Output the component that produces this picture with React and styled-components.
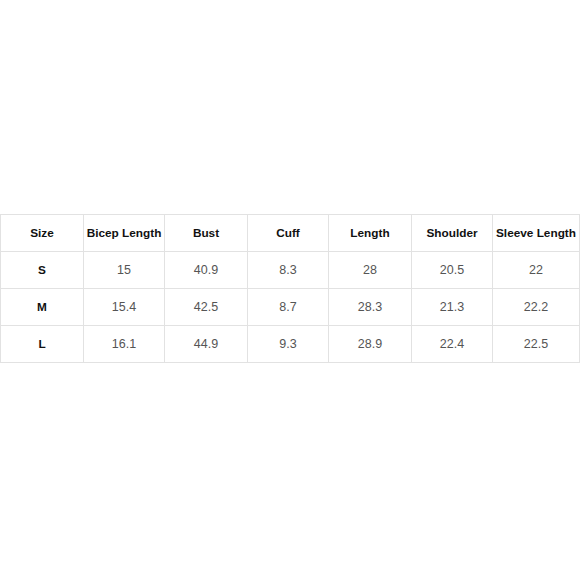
import React from 'react';
import styled, { createGlobalStyle } from 'styled-components';

const GlobalStyle = createGlobalStyle`
    body {
        margin: 0;
        background: #ffffff;
        font-family: 'Liberation Sans', Arial, sans-serif;
    }
`;

const Page = styled.div`
    width: 580px;
    height: 580px;
    padding-top: 214px;
    box-sizing: border-box;
`;

const Table = styled.table`
    width: 579px;
    border-collapse: collapse;
    table-layout: fixed;
`;

const Col = styled.col`
    width: ${props => props.w}px;
`;

const Cell = styled.td`
    height: 36px;
    padding: 0;
    border: 1px solid #e2e2e2;
    text-align: center;
    vertical-align: middle;
    font-size: ${props => (props.head ? '11.8px' : '12.5px')};
    color: ${props => (props.head ? '#111' : '#555')};
    font-weight: ${props => (props.head ? 'bold' : 'normal')};
    white-space: nowrap;
`;

const widths = [83, 81, 83, 81, 83, 81, 87];

const headers = ['Size', 'Bicep Length', 'Bust', 'Cuff', 'Length', 'Shoulder', 'Sleeve Length'];

const rows = [
    ['S', '15', '40.9', '8.3', '28', '20.5', '22'],
    ['M', '15.4', '42.5', '8.7', '28.3', '21.3', '22.2'],
    ['L', '16.1', '44.9', '9.3', '28.9', '22.4', '22.5'],
];

export default function App() {
    return (
        <Page>
            <GlobalStyle />
            <Table>
                <colgroup>
                    {widths.map((w, i) => <Col w={w} key={i} />)}
                </colgroup>
                <tbody>
                    <tr>
                        {headers.map(h => <Cell head key={h}>{h}</Cell>)}
                    </tr>
                    {rows.map(r => (
                        <tr key={r[0]}>
                            {r.map((v, i) => <Cell head={i === 0} key={i}>{v}</Cell>)}
                        </tr>
                    ))}
                </tbody>
            </Table>
        </Page>
    );
}
